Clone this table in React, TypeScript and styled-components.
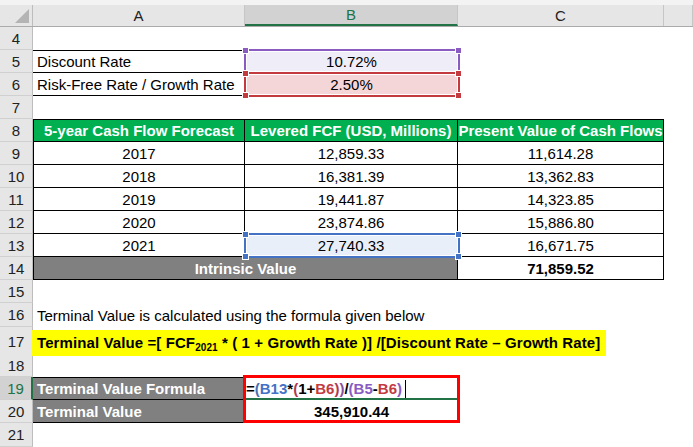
import React from 'react';
import styled, { createGlobalStyle, css } from 'styled-components';

const FONT = `"Liberation Sans", Arial, sans-serif`;
const COLS = '33px 212px 213px 206px 1fr';
const XL_GREEN = '#217346';

const Global = createGlobalStyle`
  html, body { margin: 0; padding: 0; background: #ffffff; }
  body { font-family: ${FONT}; width: 693px; height: 447px; overflow: hidden; }
`;

const Sheet = styled.div`
  display: flex;
  flex-direction: column;
  width: 693px;
  height: 447px;
  overflow: hidden;
  background: #ffffff;
  font-size: 15px;
  color: #000;
`;

const HeaderBar = styled.div`
  display: grid;
  grid-template-columns: ${COLS};
  height: 27px;
  box-sizing: border-box;
  padding-top: 5px;
  background: #f3f3f3;
  border-bottom: 1px solid #ababab;
`;

const Corner = styled.div`
  display: flex;
  justify-content: flex-end;
  align-items: flex-end;
  padding: 0 3px 3px 0;
  background: #e6e6e6;
  border-right: 1px solid #bdbdbd;
  box-sizing: border-box;
`;

const CornerTriangle = styled.div`
  width: 0;
  height: 0;
  border-left: 14px solid transparent;
  border-bottom: 14px solid #b4b4b4;
`;

const ColHead = styled.div<{ $active?: boolean }>`
  display: flex;
  align-items: center;
  justify-content: center;
  box-sizing: border-box;
  background: #e6e6e6;
  border-right: 1px solid #c6c6c6;
  color: #222;
  font-size: 15px;
  ${(p) =>
    p.$active &&
    css`
      background: #d2d2d2;
      color: ${XL_GREEN};
      border-bottom: 2px solid ${XL_GREEN};
    `}
`;

const Row = styled.div<{ $h: number }>`
  display: grid;
  grid-template-columns: ${COLS};
  height: ${(p) => p.$h}px;
  flex: none;
`;

const RowNum = styled.div<{ $active?: boolean }>`
  display: flex;
  align-items: center;
  justify-content: center;
  box-sizing: border-box;
  background: #e6e6e6;
  border-right: 1px solid #bdbdbd;
  border-bottom: 1px solid #d0d0d0;
  color: #222;
  font-size: 15px;
  ${(p) =>
    p.$active &&
    css`
      background: #d2d2d2;
      color: ${XL_GREEN};
      border-right: 2px solid ${XL_GREEN};
    `}
`;

type CellProps = {
  $align?: 'left' | 'center' | 'right';
  $bold?: boolean;
  $bg?: string;
  $color?: string;
  $bt?: boolean;
  $bb?: boolean;
  $bl?: boolean;
  $br?: boolean;
  $span?: number;
  $z?: number;
};

const Cell = styled.div<CellProps>`
  position: relative;
  display: flex;
  align-items: center;
  justify-content: ${(p) =>
    p.$align === 'center' ? 'center' : p.$align === 'right' ? 'flex-end' : 'flex-start'};
  box-sizing: border-box;
  padding: 0 4px;
  white-space: nowrap;
  font-weight: ${(p) => (p.$bold ? 700 : 400)};
  background: ${(p) => p.$bg || 'transparent'};
  color: ${(p) => p.$color || '#000'};
  border-top: ${(p) => (p.$bt ? '1px solid #000' : 'none')};
  border-bottom: ${(p) => (p.$bb ? '1px solid #000' : 'none')};
  border-left: ${(p) => (p.$bl ? '1px solid #000' : 'none')};
  border-right: ${(p) => (p.$br ? '1px solid #000' : 'none')};
  grid-column: span ${(p) => p.$span || 1};
  z-index: ${(p) => p.$z || 0};
`;

const RefBox = styled.div<{ $c: string; $w: number; $h: number; $t: number; $l: number; $bw?: number; $z?: number; $inset?: boolean }>`
  position: absolute;
  top: ${(p) => p.$t}px;
  left: ${(p) => p.$l}px;
  width: ${(p) => p.$w}px;
  height: ${(p) => p.$h}px;
  box-sizing: border-box;
  border: ${(p) => p.$bw || 2}px solid ${(p) => p.$c};
  box-shadow: ${(p) => (p.$inset === false ? 'none' : 'inset 0 0 0 1px #ffffff')};
  z-index: ${(p) => p.$z || 2};
  pointer-events: none;
`;

const Handle = styled.div<{ $c: string; $pos: 'tl' | 'tr' | 'bl' | 'br' }>`
  position: absolute;
  width: 5px;
  height: 5px;
  background: ${(p) => p.$c};
  border: 1px solid #ffffff;
  ${(p) => (p.$pos[0] === 't' ? 'top: -4px;' : 'bottom: -4px;')}
  ${(p) => (p.$pos[1] === 'l' ? 'left: -4px;' : 'right: -4px;')}
`;

const Highlight = styled.span`
  display: inline-block;
  align-self: flex-start;
  margin: 3px 0 0 -5px;
  height: 26px;
  line-height: 26px;
  padding: 0 6px 0 5px;
  background: #ffff00;
  font-weight: 700;
  letter-spacing: 0.1px;
`;

const Sub = styled.sub`
  font-size: 10px;
  vertical-align: -3px;
  line-height: 0;
`;

const Ref = styled.span<{ $c: string }>`
  color: ${(p) => p.$c};
`;

const Caret = styled.span`
  display: inline-block;
  width: 1px;
  height: 18px;
  margin-left: 3px;
  background: #000;
`;

const ActiveLine = styled.div`
  position: absolute;
  left: 1px;
  right: 0;
  bottom: 0;
  height: 2px;
  background: ${XL_GREEN};
`;

const BLUE = '#4472c4';
const RED = '#c33b3f';
const PURPLE = '#8a5cc2';
const TABLE_GREEN = '#00b050';
const GRAY = '#808080';

const tableRows = [
  ['2017', '12,859.33', '11,614.28'],
  ['2018', '16,381.39', '13,362.83'],
  ['2019', '19,441.87', '14,323.85'],
  ['2020', '23,874.86', '15,886.80'],
  ['2021', '27,740.33', '16,671.75'],
];

export default function App() {
  return (
    <>
      <Global />
      <Sheet>
        <HeaderBar>
          <Corner>
            <CornerTriangle />
          </Corner>
          <ColHead>A</ColHead>
          <ColHead $active>B</ColHead>
          <ColHead>C</ColHead>
          <ColHead />
        </HeaderBar>

        <Row $h={23}>
          <RowNum>4</RowNum>
          <Cell />
          <Cell />
          <Cell />
          <Cell />
        </Row>

        <Row $h={23}>
          <RowNum>5</RowNum>
          <Cell $bt $bb>Discount Rate</Cell>
          <Cell $align="center" $bg="#efedf8" $z={2}>
            10.72%
            <RefBox $c={PURPLE} $t={-1} $l={-1} $w={216} $h={25}>
              <Handle $c={PURPLE} $pos="tl" />
              <Handle $c={PURPLE} $pos="tr" />
            </RefBox>
          </Cell>
          <Cell />
          <Cell />
        </Row>

        <Row $h={23}>
          <RowNum>6</RowNum>
          <Cell $bb>Risk-Free Rate / Growth Rate</Cell>
          <Cell $align="center" $bg="#f5d6d8" $z={3}>
            2.50%
            <RefBox $c={RED} $t={-1} $l={-1} $w={216} $h={25} $z={3}>
              <Handle $c={RED} $pos="tl" />
              <Handle $c={RED} $pos="tr" />
              <Handle $c={RED} $pos="bl" />
              <Handle $c={RED} $pos="br" />
            </RefBox>
          </Cell>
          <Cell />
          <Cell />
        </Row>

        <Row $h={23}>
          <RowNum>7</RowNum>
          <Cell />
          <Cell />
          <Cell />
          <Cell />
        </Row>

        <Row $h={23}>
          <RowNum>8</RowNum>
          <Cell $align="center" $bold $bg={TABLE_GREEN} $color="#fff" $bt $bb $bl $br>
            5-year Cash Flow Forecast
          </Cell>
          <Cell $align="center" $bold $bg={TABLE_GREEN} $color="#fff" $bt $bb $br>
            Levered FCF (USD, Millions)
          </Cell>
          <Cell $align="center" $bold $bg={TABLE_GREEN} $color="#fff" $bt $bb $br>
            Present Value of Cash Flows
          </Cell>
          <Cell />
        </Row>

        {tableRows.map(([year, fcf, pv], i) => {
          const selected = i === tableRows.length - 1;
          return (
            <Row $h={23} key={year}>
              <RowNum>{9 + i}</RowNum>
              <Cell $align="center" $bl $br $bb>
                {year}
              </Cell>
              <Cell $align="center" $br $bb $bg={selected ? '#e8eff9' : undefined} $z={selected ? 2 : 0}>
                {fcf}
                {selected && (
                  <RefBox $c={BLUE} $t={-1} $l={-1} $w={216} $h={25}>
                    <Handle $c={BLUE} $pos="tl" />
                    <Handle $c={BLUE} $pos="tr" />
                    <Handle $c={BLUE} $pos="bl" />
                    <Handle $c={BLUE} $pos="br" />
                  </RefBox>
                )}
              </Cell>
              <Cell $align="center" $br $bb>
                {pv}
              </Cell>
              <Cell />
            </Row>
          );
        })}

        <Row $h={23}>
          <RowNum>14</RowNum>
          <Cell $span={2} $align="center" $bold $bg={GRAY} $color="#fff" $bl $br $bb>
            Intrinsic Value
          </Cell>
          <Cell $align="center" $bold $br $bb>
            71,859.52
          </Cell>
          <Cell />
        </Row>

        <Row $h={23}>
          <RowNum>15</RowNum>
          <Cell />
          <Cell />
          <Cell />
          <Cell />
        </Row>

        <Row $h={24}>
          <RowNum>16</RowNum>
          <Cell $span={4}>Terminal Value is calculated using the formula given below</Cell>
        </Row>

        <Row $h={27}>
          <RowNum>17</RowNum>
          <Cell $span={4}>
            <Highlight>
              Terminal Value =[ FCF<Sub>2021</Sub> * ( 1 + Growth Rate )] /[Discount Rate – Growth Rate]
            </Highlight>
          </Cell>
        </Row>

        <Row $h={23}>
          <RowNum>18</RowNum>
          <Cell />
          <Cell />
          <Cell />
          <Cell />
        </Row>

        <Row $h={23}>
          <RowNum $active>19</RowNum>
          <Cell $bold $bg={GRAY} $color="#fff" $bt $bb $br>
            Terminal Value Formula
          </Cell>
          <Cell $bold $z={4} style={{ paddingLeft: 1 }}>
            <span>
              =<Ref $c="#4a6fb0">(</Ref>
              <Ref $c={BLUE}>B13</Ref>*<Ref $c="#b0394f">(</Ref>1+<Ref $c={RED}>B6</Ref>
              <Ref $c="#b0394f">)</Ref>
              <Ref $c="#8a4f9e">)</Ref>/<Ref $c={PURPLE}>(</Ref>
              <Ref $c={PURPLE}>B5</Ref>-<Ref $c={RED}>B6</Ref>
              <Ref $c={PURPLE}>)</Ref>
            </span>
            <Caret />
            <ActiveLine />
            <RefBox $c="#ff0000" $bw={3} $t={-2} $l={-2} $w={217} $h={48} $z={5} $inset={false} />
          </Cell>
          <Cell />
          <Cell />
        </Row>

        <Row $h={23}>
          <RowNum>20</RowNum>
          <Cell $bold $bg={GRAY} $color="#fff" $bb $br>
            Terminal Value
          </Cell>
          <Cell $align="center" $bold>
            345,910.44
          </Cell>
          <Cell />
          <Cell />
        </Row>

        <Row $h={24}>
          <RowNum>21</RowNum>
          <Cell />
          <Cell />
          <Cell />
          <Cell />
        </Row>
      </Sheet>
    </>
  );
}
